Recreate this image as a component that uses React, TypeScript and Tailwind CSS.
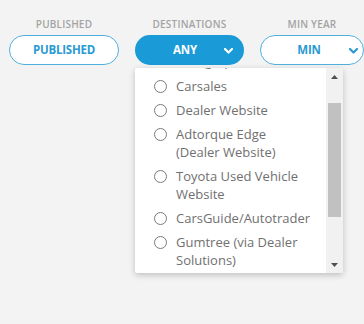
import React from "react";

const items: string[] = [
  "Autograph",
  "Carsales",
  "Dealer Website",
  "Adtorque Edge (Dealer Website)",
  "Toyota Used Vehicle Website",
  "CarsGuide/Autotrader",
  "Gumtree (via Dealer Solutions)",
  "Drive",
];

function Chevron({ color }: { color: string }) {
  return (
    <svg width="9" height="6" viewBox="0 0 9 6" fill="none">
      <polyline points="1,1 4.5,4.5 8,1" stroke={color} strokeWidth="2.2" strokeLinecap="round" strokeLinejoin="round" />
    </svg>
  );
}

export default function App() {
  return (
    <div
      className="relative w-[364px] h-[324px] overflow-hidden bg-[#f3f3f3]"
      style={{ fontFamily: '"Open Sans", "Liberation Sans", sans-serif' }}
    >
      <div className="flex gap-4 pl-[9px] pt-[18px]">
        <div className="flex flex-col items-center w-[110px] shrink-0">
          <div className="text-[10px] leading-[12px] font-semibold text-[#a3a3a3] tracking-[0.2px]">PUBLISHED</div>
          <div className="mt-[5px] w-full h-[30px] rounded-full border-[1.5px] border-[#4fb0dd] bg-white flex items-center justify-center">
            <span className="text-[11.5px] font-bold text-[#2a9ad3] tracking-[-0.2px]">PUBLISHED</span>
          </div>
        </div>
        <div className="relative flex flex-col items-center w-[109px] shrink-0">
          <div className="text-[10px] leading-[12px] font-semibold text-[#a3a3a3] tracking-[0.2px]">DESTINATIONS</div>
          <div className="mt-[5px] w-full h-[30px] rounded-full bg-[#1a9ad6] flex items-center justify-center pr-[9px] relative">
            <span className="text-[11.5px] font-bold text-white tracking-[-0.2px]">ANY</span>
            <span className="absolute right-[11px] top-[13px] flex">
              <Chevron color="#ffffff" />
            </span>
          </div>
        </div>
        <div className="flex flex-col items-center w-[104px] shrink-0">
          <div className="text-[10px] leading-[12px] font-semibold text-[#a3a3a3] tracking-[0.2px]">MIN YEAR</div>
          <div className="mt-[5px] w-full h-[30px] rounded-full border-[1.5px] border-[#4fb0dd] bg-white flex items-center justify-center pr-[6px] relative">
            <span className="text-[11.5px] font-bold text-[#2a9ad3] tracking-[-0.2px]">MIN</span>
            <span className="absolute right-[5px] top-[12px] flex">
              <Chevron color="#2a9ad3" />
            </span>
          </div>
        </div>
      </div>

      <div className="absolute left-[135px] top-[68px] w-[208px] h-[205px] bg-white flex shadow-[0_2px_6px_rgba(0,0,0,0.22)] rounded-[2px]">
        <div className="flex-1 overflow-hidden">
          <div className="mt-[-19px] flex flex-col">
            {items.map((t, i) => (
              <div key={t} className={`flex items-start py-[3px] pl-[19px] ${i === 0 ? "pb-[4px]" : ""}`}>
                <span className="mt-[2.5px] w-[13px] h-[13px] rounded-full border-[1.5px] border-[#7a7a7a] shrink-0" />
                <span className="ml-[9px] w-[136px] text-[13px] leading-[18px] text-[#707070]">{t}</span>
              </div>
            ))}
          </div>
        </div>
        <div className="w-[17px] bg-[#f1f1f1] flex flex-col items-center">
          <div className="h-[17px] flex items-center justify-center">
            <svg width="7" height="4" viewBox="0 0 7 4"><polygon points="0,4 3.5,0 7,4" fill="#505050" /></svg>
          </div>
          <div className="mt-[18px] w-[13px] h-[114px] bg-[#c1c1c1]" />
          <div className="flex-1" />
          <div className="h-[17px] flex items-center justify-center">
            <svg width="7" height="4" viewBox="0 0 7 4"><polygon points="0,0 7,0 3.5,4" fill="#505050" /></svg>
          </div>
        </div>
      </div>
    </div>
  );
}
